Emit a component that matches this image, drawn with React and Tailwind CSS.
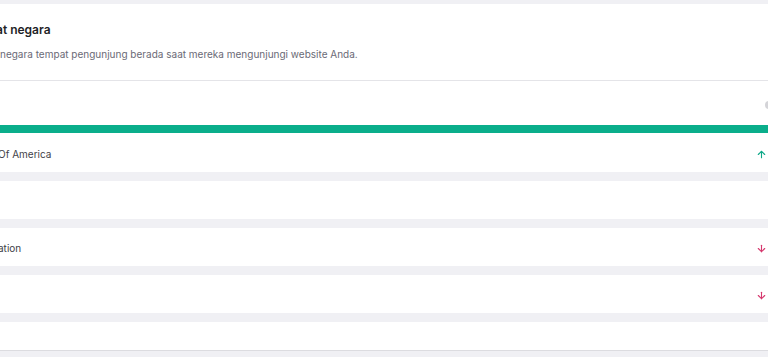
import React from "react";
import { ArrowUp, ArrowDown } from "lucide-react";

function Row({ label, dir, h = "h-[38px]", pt = "pt-[2px]" }) {
  return (
    <div className={`bg-white ${h} ${pt} flex items-center justify-between pr-[1px]`}>
      <span className="text-[10px] text-[#3f3f48] -ml-[2px] whitespace-nowrap">{label}</span>
      {dir === "up" && <ArrowUp size={11} strokeWidth={2.4} className="text-[#0fa888]" />}
      {dir === "down" && <ArrowDown size={11} strokeWidth={2.4} className="text-[#d6386e]" />}
    </div>
  );
}

export default function App() {
  return (
    <div
      className="w-[768px] h-[357px] overflow-hidden bg-[#f0f0f4] pt-[4px]"
      style={{ fontFamily: "Inter, 'Noto Sans', sans-serif" }}
    >
      <div className="bg-white h-[77px] border-b border-[#e4e4e8] flex flex-col pt-[18px]">
        <div className="text-[12px] font-semibold text-[#1f1f27] -ml-[4px] leading-[16px] whitespace-nowrap">at negara</div>
        <div className="text-[10px] text-[#6a6a76] mt-[9px] leading-[14px] whitespace-nowrap">
          negara tempat pengunjung berada saat mereka mengunjungi website Anda.
        </div>
      </div>
      <div className="bg-white h-[44px] flex items-center justify-end">
        <div className="w-[8px] h-[8px] rounded-full bg-[#d4d4d8] -mr-[5px] mt-[4px]" />
      </div>
      <div className="h-[8px] bg-[#0aae8b]" />
      <div className="flex flex-col gap-[9px]">
        <Row label="Of America" dir="up" h="h-[39px]" pt="pt-[3px]" />
        <Row label="" />
        <Row label="ation" dir="down" />
        <Row label="" dir="down" />
        <div className="bg-white h-[29px] border-b border-[#dcdce0]" />
      </div>
    </div>
  );
}
